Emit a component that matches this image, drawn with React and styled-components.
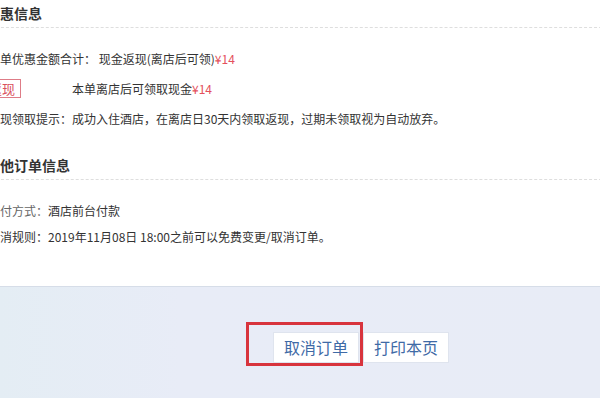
import React from "react";
import styled, { createGlobalStyle } from "styled-components";

const Global = createGlobalStyle`
  html, body { margin: 0; padding: 0; }
  body {
    width: 600px;
    height: 398px;
    overflow: hidden;
    font-family: "Noto Sans CJK SC", "Liberation Sans", sans-serif;
    background: #e8ecf6;
  }
`;

const Page = styled.div`
  width: 600px;
  height: 398px;
  display: flex;
  flex-direction: column;
  overflow: hidden;
`;

const Panel = styled.div`
  background: #fff;
  height: 286px;
  border-bottom: 1px solid #d6dde8;
  overflow: hidden;
  flex-shrink: 0;
`;

const Section = styled.section`
  margin-left: -12px;
  margin-top: ${(p) => p.$top}px;
`;

const Title = styled.h3`
  margin: 0 -12px 0 -2px;
  height: 27px;
  line-height: 27px;
  font-size: 14px;
  font-weight: bold;
  color: #333;
  border-bottom: 1px dashed #dedede;
`;

const Lines = styled.div`
  padding-top: ${(p) => p.$pad}px;
  font-size: 12px;
  color: #333;
`;

const Line = styled.div`
  display: flex;
  align-items: center;
  height: ${(p) => p.$h}px;
  white-space: nowrap;
`;

const Label = styled.span`
  color: ${(p) => (p.$muted ? "#666" : "#333")};
`;

const Money = styled.span`
  color: #e4505c;
`;

const TagCell = styled.span`
  width: 84px;
  display: flex;
  flex-shrink: 0;
`;

const Tag = styled.span`
  margin-left: -6px;
  border: 1px solid #de7c87;
  color: #d9505c;
  padding: 0 5px 0 6px;
  height: 17px;
  line-height: 17px;
  font-size: 13px;
`;

const Footer = styled.div`
  position: relative;
  flex: 1;
  display: flex;
  align-items: flex-start;
  gap: 4px;
  padding: 45px 0 0 273px;
  background: linear-gradient(90deg, #e4edf4 0%, #e8ecf7 30%, #e8ecf6 100%);
`;

const Button = styled.button`
  height: 31px;
  padding: 0 10px;
  background: #fff;
  border: 1px solid #dfe4ee;
  color: #3f6aa6;
  font-family: "Noto Sans CJK SC", sans-serif;
  font-size: 16px;
  line-height: 29px;
  cursor: pointer;
`;

const Highlight = styled.div`
  position: absolute;
  left: 246px;
  top: 35px;
  width: 111px;
  height: 38px;
  border: 3px solid #d8343d;
  pointer-events: none;
`;

export default function App() {
  return (
    <Page>
      <Global />
      <Panel>
        <Section $top={0}>
          <Title>优惠信息</Title>
          <Lines $pad={15}>
            <Line $h={30}>
              <Label>本单优惠金额合计：</Label>
              &nbsp;现金返现(离店后可领)<Money>¥14</Money>
            </Line>
            <Line $h={30}>
              <TagCell>
                <Tag>返现</Tag>
              </TagCell>
              本单离店后可领取现金<Money>¥14</Money>
            </Line>
            <Line $h={30}>
              <Label>返现领取提示：</Label>
              成功入住酒店，在离店日30天内领取返现，过期未领取视为自动放弃。
            </Line>
          </Lines>
        </Section>
        <Section $top={19}>
          <Title>其他订单信息</Title>
          <Lines $pad={17}>
            <Line $h={26}>
              <Label $muted>支付方式：</Label>
              酒店前台付款
            </Line>
            <Line $h={26}>
              <Label>取消规则：</Label>
              2019年11月08日 18:00之前可以免费变更/取消订单。
            </Line>
          </Lines>
        </Section>
      </Panel>
      <Footer>
        <Button>取消订单</Button>
        <Button>打印本页</Button>
        <Highlight />
      </Footer>
    </Page>
  );
}
